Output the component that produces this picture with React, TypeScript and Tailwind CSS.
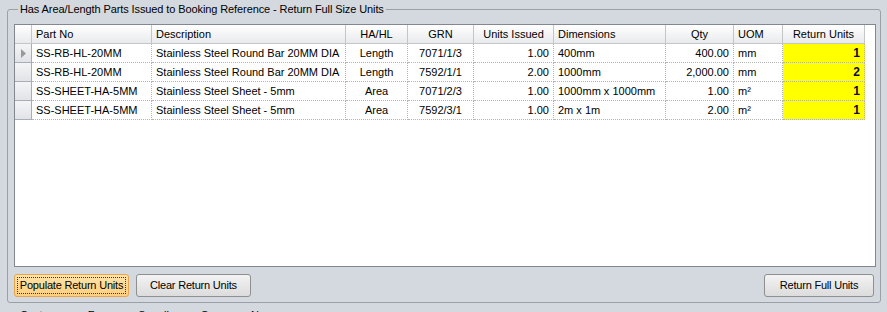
const columns = [
  { key: 'partNo', label: 'Part No', width: 120, align: 'left', headAlign: 'left' },
  { key: 'description', label: 'Description', width: 194, align: 'left', headAlign: 'left' },
  { key: 'hahl', label: 'HA/HL', width: 62, align: 'center', headAlign: 'center' },
  { key: 'grn', label: 'GRN', width: 66, align: 'center', headAlign: 'center' },
  { key: 'unitsIssued', label: 'Units Issued', width: 80, align: 'right', headAlign: 'center' },
  { key: 'dimensions', label: 'Dimensions', width: 112, align: 'left', headAlign: 'left' },
  { key: 'qty', label: 'Qty', width: 68, align: 'right', headAlign: 'center' },
  { key: 'uom', label: 'UOM', width: 49, align: 'left', headAlign: 'left' },
  { key: 'returnUnits', label: 'Return Units', width: 82, align: 'right', headAlign: 'center' },
] as const;

type Row = Record<(typeof columns)[number]['key'], string>;

const rows: Row[] = [
  { partNo: 'SS-RB-HL-20MM', description: 'Stainless Steel Round Bar 20MM DIA', hahl: 'Length', grn: '7071/1/3', unitsIssued: '1.00', dimensions: '400mm', qty: '400.00', uom: 'mm', returnUnits: '1' },
  { partNo: 'SS-RB-HL-20MM', description: 'Stainless Steel Round Bar 20MM DIA', hahl: 'Length', grn: '7592/1/1', unitsIssued: '2.00', dimensions: '1000mm', qty: '2,000.00', uom: 'mm', returnUnits: '2' },
  { partNo: 'SS-SHEET-HA-5MM', description: 'Stainless Steel Sheet - 5mm', hahl: 'Area', grn: '7071/2/3', unitsIssued: '1.00', dimensions: '1000mm x 1000mm', qty: '1.00', uom: 'm²', returnUnits: '1' },
  { partNo: 'SS-SHEET-HA-5MM', description: 'Stainless Steel Sheet - 5mm', hahl: 'Area', grn: '7592/3/1', unitsIssued: '1.00', dimensions: '2m x 1m', qty: '2.00', uom: 'm²', returnUnits: '1' },
];

const alignClass = {
  left: 'justify-start',
  center: 'justify-center',
  right: 'justify-end',
};

const HeaderRow = () => (
  <div className="flex h-[19px]">
    <div className="w-[17px] shrink-0 bg-gradient-to-b from-white to-[#e9eaec] border-r border-b border-[#c5c5c5]" />
    {columns.map((c) => (
      <div
        key={c.key}
        style={{ width: c.width }}
        className={`shrink-0 flex items-center px-[4px] whitespace-nowrap bg-gradient-to-b from-white to-[#e9eaec] border-r border-b border-[#c5c5c5] ${alignClass[c.headAlign]}`}
      >
        {c.label}
      </div>
    ))}
  </div>
);

const DataRow = ({ row, current }: { row: Row; current: boolean }) => (
  <div className="flex h-[19px]">
    <div className="w-[17px] shrink-0 flex items-center justify-center bg-gradient-to-b from-[#f4f5f7] to-[#e1e3e7] border-r border-b border-[#a9adb5]">
      {current && (
        <svg width="5" height="9" viewBox="0 0 5 9">
          <path d="M0 0 L5 4.5 L0 9 Z" fill="#9a9a9a" />
        </svg>
      )}
    </div>
    {columns.map((c) => {
      const isReturn = c.key === 'returnUnits';
      return (
        <div
          key={c.key}
          style={{ width: c.width }}
          className={`shrink-0 flex items-center px-[4px] whitespace-nowrap border-r border-b border-dotted border-[#b4b4b4] ${alignClass[c.align]} ${
            isReturn ? 'bg-[#ffff00] font-bold text-[12px] text-[#0a0a30]' : ''
          }`}
        >
          {row[c.key]}
        </div>
      );
    })}
  </div>
);

const WinButton = ({
  label,
  width,
  focused,
}: {
  label: string;
  width: number;
  focused?: boolean;
}) => (
  <div
    style={{ width }}
    className={`h-[23px] shrink-0 rounded-[3px] border p-[2px] whitespace-nowrap tracking-[-0.2px] ${
      focused
        ? 'border-[#e8a54c] bg-gradient-to-b from-[#ffe3a8] to-[#fccf7c]'
        : 'border-[#8e8f8f] bg-gradient-to-b from-[#f3f3f3] to-[#dcdcdc]'
    }`}
  >
    <div
      className={`h-full flex items-center justify-center ${
        focused ? 'border border-dotted border-[#333]' : ''
      }`}
    >
      {label}
    </div>
  </div>
);

export default function App() {
  return (
    <div className="w-[887px] h-[312px] overflow-hidden bg-[#d4d8df] text-[11px] text-black font-['Liberation_Sans',Arial,sans-serif] leading-none">
      <div className="pt-[3px] pl-[7px] pr-[6px]">
        <div className="relative mt-[6px] h-[294px] rounded-[3px] border border-[#9b9fa6] px-[6px] pt-[14px]">
          <div className="absolute -top-[7px] left-[10px] bg-[#d4d8df] px-[2px] leading-[13px] whitespace-nowrap tracking-[-0.1px]">
            Has Area/Length Parts Issued to Booking Reference - Return Full Size Units
          </div>
          <div className="h-[243px] w-[862px] border border-[#828790] bg-white overflow-hidden">
            <HeaderRow />
            {rows.map((r, i) => (
              <DataRow key={i} row={r} current={i === 0} />
            ))}
          </div>
          <div className="mt-[7px] flex gap-[7px]">
            <WinButton label="Populate Return Units" width={115} focused />
            <WinButton label="Clear Return Units" width={115} />
            <div className="flex-1" />
            <WinButton label="Return Full Units" width={110} />
          </div>
        </div>
      </div>
      <div className="flex gap-[20px] pl-[20px] pt-[6px] leading-[13px]">
        <span>Customer</span>
        <span>Fence</span>
        <span>Supplies</span>
        <span>Group</span>
        <span>Name</span>
      </div>
    </div>
  );
}
